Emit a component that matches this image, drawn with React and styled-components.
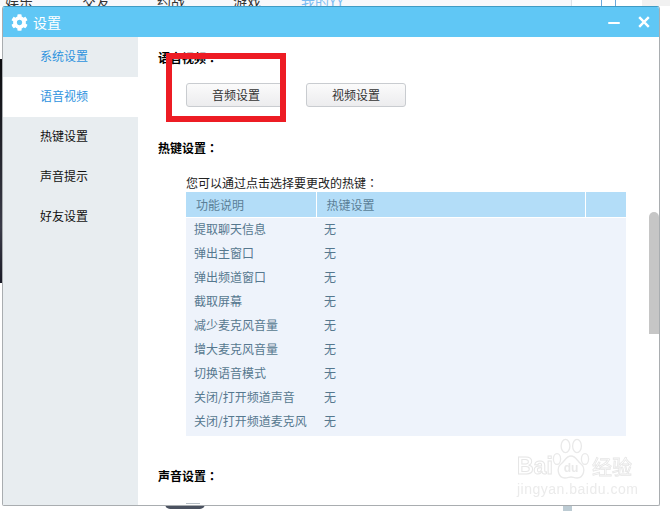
import React from 'react';
import styled, { createGlobalStyle } from 'styled-components';
import { FaCog } from 'react-icons/fa';

const navItems = [
  { label: '娱乐', width: 77 },
  { label: '交友', width: 75 },
  { label: '约战', width: 76 },
  { label: '游戏', width: 68 },
  { label: '我的YY', width: 60, link: true },
];

const menuItems = ['系统设置', '语音视频', '热键设置', '声音提示', '好友设置'];

const hotkeys = [
  '提取聊天信息',
  '弹出主窗口',
  '弹出频道窗口',
  '截取屏幕',
  '减少麦克风音量',
  '增大麦克风音量',
  '切换语音模式',
  '关闭/打开频道声音',
  '关闭/打开频道麦克风',
];

export default function App() {
  return (
    <Desktop>
      <GlobalStyle />
      <TopBar>
        <TopNav>
          {navItems.map((item) => (
            <NavItem key={item.label} $width={item.width} $link={item.link}>{item.label}</NavItem>
          ))}
        </TopNav>
        <TopMiddle>
          <TopIcon />
        </TopMiddle>
        <TopRight />
      </TopBar>
      <PhotoStrip />
      <Shadow />
      <Post />

      <Window>
        <TitleBar>
          <FaCog size={17} color="#fff" />
          <WindowTitle>设置</WindowTitle>
          <WindowControls>
            <svg width="12" height="12" viewBox="0 0 12 12">
              <rect x="0" y="6" width="12" height="2" rx="1" fill="#fff" />
            </svg>
            <svg width="12" height="12" viewBox="0 0 12 12">
              <path d="M1.2 1.2l9.6 9.6M10.8 1.2l-9.6 9.6" stroke="#fff" strokeWidth="2.4" />
            </svg>
          </WindowControls>
        </TitleBar>
        <Body>
          <Sidebar>
            {menuItems.map((item, i) => (
              <MenuItem key={item} $active={i === 1} $tinted={i === 0}>{item}</MenuItem>
            ))}
          </Sidebar>
          <Content>
            <Heading>语音视频<Colon>：</Colon></Heading>
            <ButtonRow>
              <Button type="button">音频设置</Button>
              <Button type="button">视频设置</Button>
            </ButtonRow>
            <Heading>热键设置<Colon>：</Colon></Heading>
            <Hint>您可以通过点击选择要更改的热键<Colon>：</Colon></Hint>
            <HotkeyTable>
              <thead>
                <tr>
                  <HeadCell $width={130}>功能说明</HeadCell>
                  <HeadCell $width={269}>热键设置</HeadCell>
                  <HeadCell />
                </tr>
              </thead>
              <tbody>
                {hotkeys.map((name) => (
                  <tr key={name}>
                    <Cell>{name}</Cell>
                    <Cell>无</Cell>
                    <Cell />
                  </tr>
                ))}
              </tbody>
            </HotkeyTable>
            <SoundHeading>声音设置<Colon>：</Colon></SoundHeading>
            <SliderStub />
          </Content>
        </Body>
        <ScrollThumb />
        <Watermark>
          <WatermarkRow>
            <WatermarkLogo>Bai</WatermarkLogo>
            <svg width="38" height="42" viewBox="0 0 38 42">
              <g fill="none" stroke="#e9e9e9" strokeWidth="1.3">
                <ellipse cx="5" cy="21" rx="3.6" ry="5.4" />
                <ellipse cx="13.5" cy="8" rx="4.4" ry="6.6" />
                <ellipse cx="25" cy="8" rx="4.4" ry="6.6" />
                <ellipse cx="33" cy="21" rx="3.6" ry="5.4" />
                <path d="M19 18c-5 0-6 5-10 8-5 4-3 14 4 14 3 0 4-1 6-1s3 1 6 1c7 0 9-10 4-14-4-3-5-8-10-8z" />
              </g>
              <text x="19" y="34" textAnchor="middle" fontSize="12" fontWeight="700" fontFamily="Liberation Sans, sans-serif" fill="#e9e9e9">du</text>
            </svg>
            <WatermarkCn>经验</WatermarkCn>
          </WatermarkRow>
          <WatermarkUrl>jingyan.baidu.com</WatermarkUrl>
        </Watermark>
      </Window>

      <RedFrame />
    </Desktop>
  );
}

const GlobalStyle = createGlobalStyle`
  html, body {
    margin: 0;
    padding: 0;
    background: #fff;
  }
  body {
    font-family: "Noto Sans CJK SC", "Liberation Sans", sans-serif;
    font-size: 12px;
  }
`;

const Desktop = styled.div`
  position: relative;
  width: 670px;
  height: 511px;
  overflow: hidden;
  background: #fff;
`;

const TopBar = styled.div`
  display: flex;
  height: 6px;
  overflow: hidden;
`;

const TopNav = styled.div`
  flex: none;
  display: flex;
  box-sizing: border-box;
  width: 572px;
  padding-left: 5px;
  background: #f7f8fb;
  border-right: 1px solid #dfe3e8;
`;

const NavItem = styled.span`
  flex: none;
  width: ${(props) => props.$width}px;
  margin-top: -9px;
  font-size: 14px;
  line-height: 20px;
  color: ${(props) => (props.$link ? '#7dbcf2' : '#333')};
`;

const TopMiddle = styled.div`
  flex: none;
  width: 70px;
  padding-left: 29px;
  box-sizing: border-box;
  background: #fff;
`;

const TopIcon = styled.div`
  box-sizing: border-box;
  width: 15px;
  height: 6px;
  border: solid #6aa9dc;
  border-width: 0 1px;
`;

const TopRight = styled.div`
  flex: 1;
  background: #f1f1f1;
`;

const PhotoStrip = styled.div`
  position: absolute;
  left: 0;
  top: 59px;
  width: 3px;
  height: 224px;
  background: linear-gradient(#0c0c0f 0%, #23242c 40%, #3a3b48 75%, #1a1b26 100%);
`;

const Shadow = styled.div`
  position: absolute;
  left: 165px;
  top: 504px;
  width: 40px;
  height: 5px;
  border-radius: 0 0 20px 20px;
  background: #4b5260;
`;

const Post = styled.div`
  position: absolute;
  left: 563px;
  top: 505px;
  width: 9px;
  height: 6px;
  background: #bccbd3;
`;

const Window = styled.div`
  position: absolute;
  left: 2px;
  top: 6px;
  box-sizing: border-box;
  width: 658px;
  height: 500px;
  display: flex;
  flex-direction: column;
  overflow: hidden;
  background: #fff;
  border: 1px solid #a9adb0;
  border-top-color: #3f9bc4;
  border-radius: 3px 3px 2px 2px;
`;

const TitleBar = styled.div`
  flex: none;
  display: flex;
  align-items: center;
  height: 30px;
  padding: 0 8px;
  background: #60c7f5;
`;

const WindowTitle = styled.span`
  margin-left: 5px;
  font-size: 14px;
  color: #fff;
`;

const WindowControls = styled.div`
  display: flex;
  align-items: center;
  gap: 18px;
  margin-left: auto;
  margin-right: 1px;
`;

const Body = styled.div`
  flex: 1;
  display: flex;
  min-height: 0;
`;

const Sidebar = styled.div`
  flex: none;
  width: 135px;
  background: #e8edf0;
`;

const MenuItem = styled.div`
  height: 40px;
  padding-left: 37px;
  line-height: 38px;
  font-size: 12px;
  color: ${(props) => (props.$active || props.$tinted ? '#2e93de' : '#111')};
  background: ${(props) => (props.$active ? '#fff' : 'transparent')};
`;

const Content = styled.div`
  flex: 1;
  padding: 12px 0 0 20px;
  min-width: 0;
  overflow: hidden;
`;

const Heading = styled.div`
  height: 18px;
  line-height: 18px;
  font-size: 12px;
  font-weight: 700;
  color: #000;
`;

const Colon = styled.span`
  font-family: "Noto Sans CJK TC", sans-serif;
`;

const ButtonRow = styled.div`
  display: flex;
  gap: 20px;
  margin: 16px 0 32px 28px;
`;

const Button = styled.button`
  box-sizing: border-box;
  width: 100px;
  height: 24px;
  padding: 0 0 2px;
  font-family: inherit;
  font-size: 12px;
  color: #333;
  background: linear-gradient(#fbfbfb, #ececee);
  border: 1px solid #c9ccd0;
  border-radius: 3px;
`;

const Hint = styled.div`
  height: 18px;
  margin: 17px 0 0 28px;
  line-height: 18px;
  font-size: 12px;
  color: #222;
`;

const HotkeyTable = styled.table`
  width: 440px;
  margin-left: 28px;
  border-collapse: collapse;
  table-layout: fixed;
  background: #eef3fb;
  tbody tr:last-child td {
    height: 27px;
    padding-bottom: 5px;
  }
`;

const HeadCell = styled.th`
  box-sizing: border-box;
  width: ${(props) => (props.$width ? `${props.$width}px` : 'auto')};
  height: 25px;
  padding: 0 0 0 10px;
  text-align: left;
  font-size: 12px;
  font-weight: 400;
  color: #5b7f97;
  background: #b3ddf8;
  border-right: 1px solid #fff;
  border-bottom: 1px solid #fff;
  &:last-child {
    border-right: 0;
  }
`;

const Cell = styled.td`
  box-sizing: border-box;
  height: 24px;
  padding: 0 0 2px 8px;
  font-size: 12px;
  color: #56788f;
  white-space: nowrap;
`;

const SoundHeading = styled(Heading)`
  margin-top: 31px;
`;

const SliderStub = styled.div`
  width: 14px;
  height: 1px;
  margin: 18px 0 0 28px;
  background: #b8c0c6;
`;

const ScrollThumb = styled.div`
  position: absolute;
  right: 0;
  top: 205px;
  width: 10px;
  height: 122px;
  border-radius: 5px 5px 0 0;
  background: #c6c6c6;
`;

const Watermark = styled.div`
  position: absolute;
  left: 514px;
  top: 431px;
  width: 124px;
  color: #ebebeb;
  filter: blur(0.3px);
`;

const WatermarkRow = styled.div`
  display: flex;
  align-items: flex-end;
  height: 42px;
`;

const WatermarkLogo = styled.span`
  width: 35px;
  font-family: "Liberation Sans", sans-serif;
  font-size: 23px;
  line-height: 28px;
  font-weight: 700;
  color: transparent;
  -webkit-text-stroke: 1px #e6e6e6;
`;

const WatermarkCn = styled.span`
  margin-left: 2px;
  font-size: 20px;
  line-height: 27px;
  color: transparent;
  -webkit-text-stroke: 0.8px #e6e6e6;
`;

const WatermarkUrl = styled.div`
  margin-top: 2px;
  font-family: "Liberation Sans", sans-serif;
  font-size: 14px;
  line-height: 15px;
  letter-spacing: 0.5px;
  white-space: nowrap;
`;

const RedFrame = styled.div`
  position: absolute;
  left: 166px;
  top: 53px;
  width: 120px;
  height: 69px;
  box-sizing: border-box;
  border: 6px solid #ed1c24;
`;
